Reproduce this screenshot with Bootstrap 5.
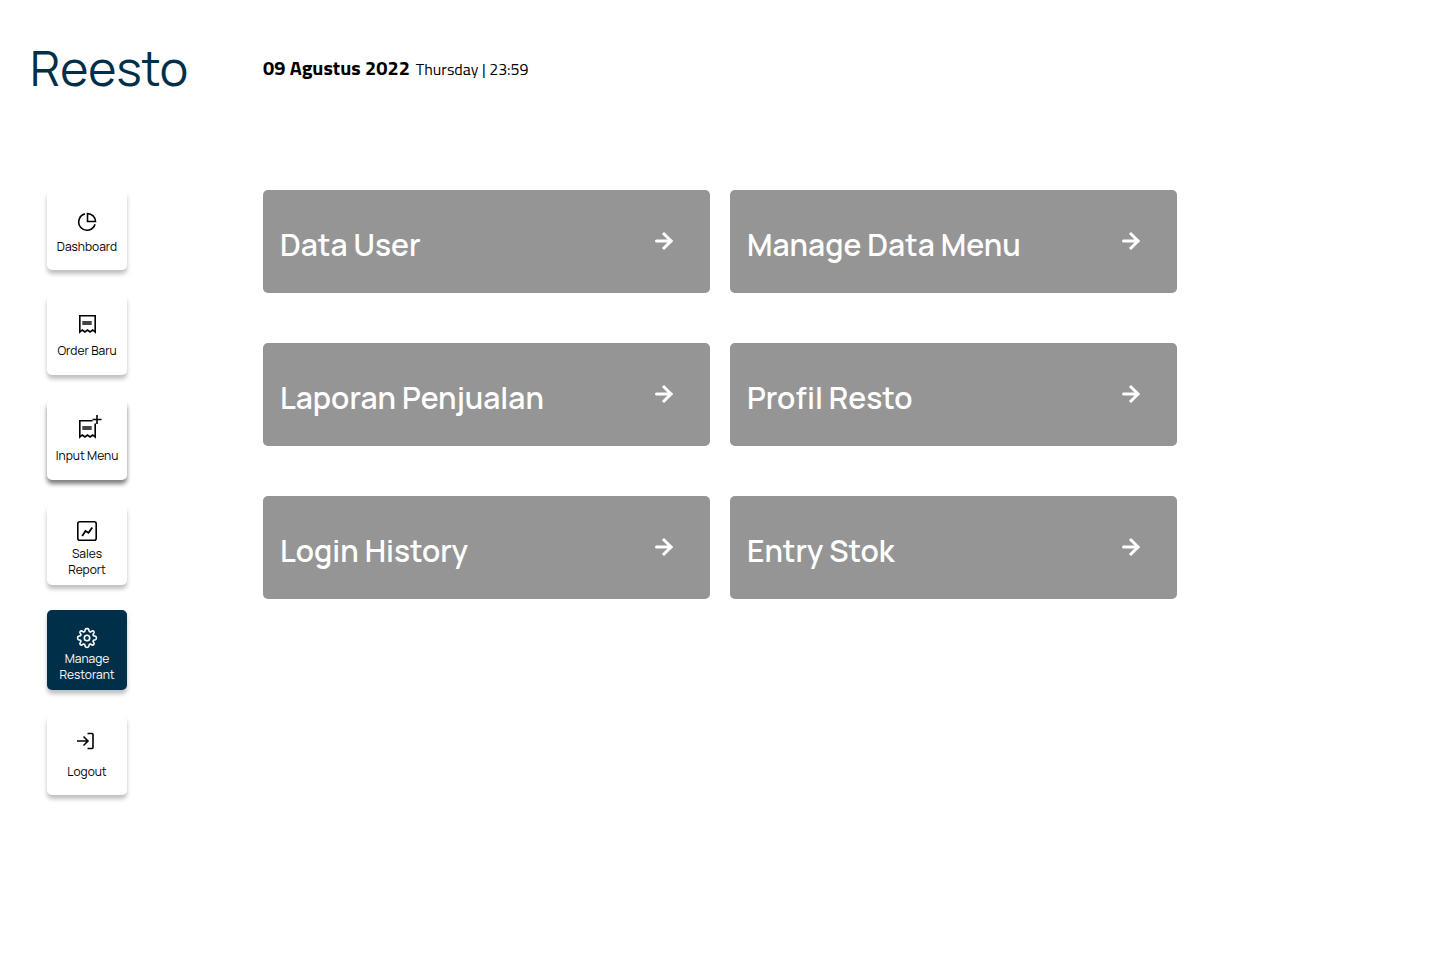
<!DOCTYPE html>
<html lang="id">
<head>
<meta charset="utf-8">
<meta name="viewport" content="width=device-width, initial-scale=1">
<title>Reesto</title>
<link href="https://cdn.jsdelivr.net/npm/bootstrap@5.3.0/dist/css/bootstrap.min.css" rel="stylesheet">
<style>
  :root { --navy: #003049; --side: 263px; }
  body { font-family: Manrope, Inter, sans-serif; background: #fff; color: #000; }
  .page-grid { display: grid; grid-template-columns: var(--side) minmax(0, 1fr); }
  .top-bar { padding-top: 32px; margin-bottom: 86px; }
  .brand { color: var(--navy); font-size: 48px; line-height: 72px; font-weight: 400; padding-left: 30px; }
  .today { font-family: "Titillium Web", "Open Sans", sans-serif; line-height: 32px; gap: 6px; }
  .today-date { font-size: 20px; font-weight: 700; }
  .today-time { font-size: 16px; }
  .side-menu { padding-left: 47px; padding-bottom: 40px; gap: 25px; }
  .tile { width: 80px; height: 80px; padding-top: 19px; border-radius: 5px; background: #fff; color: #000;
    font-size: 12px; line-height: 16px; box-shadow: 0 4px 4px rgba(0,0,0,.25); gap: 9px; }
  .tile.raised { box-shadow: 0 4px 4px rgba(0,0,0,.5); }
  .tile.dash { padding-top: 22px; gap: 7px; }
  .tile.exit { padding-top: 16px; gap: 13px; }
  .tile.two-line { padding-top: 16px; gap: 5px; }
  .tile.active { background: var(--navy); color: #fff; padding-top: 18px; gap: 3px; }
  .tile svg { width: 20px; height: 20px; overflow: visible; fill: none; stroke: currentColor; stroke-width: 1.6; }
  .menu-grid { column-gap: 20px; row-gap: 50px; padding-right: var(--side); grid-template-columns: repeat(2, minmax(0, 1fr)); }
  .menu-card { height: 103px; padding: 6px 36px 0 17px; border-radius: 5px; background: #959595; color: #fff;
    font-size: 30px; font-weight: 600; }
  .menu-card svg { width: 20px; height: 20px; margin-bottom: 8px; fill: none; stroke: currentColor; stroke-width: 3; }
</style>
</head>
<body>
<svg class="d-none" aria-hidden="true">
  <symbol id="arrow" viewBox="0 0 20 20"><path d="M2.500 10H17" stroke-linecap="round"/><path d="M9 2l8 8-8 8"/></symbol>
  <symbol id="receipt" viewBox="0 0 20 20"><path d="M5.300 9h9.400" stroke="#444" stroke-width="4"/></symbol>
</svg>
<header class="page-grid top-bar align-items-center">
  <h1 class="brand mb-0">Reesto</h1>
  <div class="today d-flex align-items-baseline"><span class="today-date">09 Agustus 2022</span><span class="today-time">Thursday | 23:59</span></div>
</header>
<div class="page-grid">
  <nav class="side-menu d-flex flex-column" aria-label="Menu utama">
    <a href="#" class="tile dash d-flex flex-column align-items-center text-center text-decoration-none">
      <svg viewBox="0 0 20 20"><path d="M8 1.900A8.300 8.300 0 1 0 18 12.300M10.500 1.600V9.500h8A8 8 0 0 0 10.500 1.600Z"/></svg>
      <span>Dashboard</span></a>
    <a href="#" class="tile d-flex flex-column align-items-center text-center text-decoration-none">
      <svg viewBox="0 0 20 20"><path d="M2.800 18V1.800h15.400V18l-2.500-2-2.600 2-2.600-2-2.600 2-2.600-2Z"/><use href="#receipt"/></svg>
      <span>Order Baru</span></a>
    <a href="#" class="tile raised d-flex flex-column align-items-center text-center text-decoration-none">
      <svg viewBox="0 0 20 20"><path d="M15.500 1.800H2.800V18l2.500-2 2.600 2 2.600-2 2.600 2 2.600-2 2.500 2V4.500M20-4V5M15.500.500h9"/><use href="#receipt"/></svg>
      <span>Input Menu</span></a>
    <a href="#" class="tile two-line d-flex flex-column align-items-center text-center text-decoration-none">
      <svg viewBox="0 0 20 20"><rect x=".8" y=".8" width="18.400" height="18.400" rx="2"/><path d="M5.200 15 8.500 10l3 1.800L15.300 6.500" stroke-width="1.800"/></svg>
      <span>Sales<br>Report</span></a>
    <a href="#" class="tile two-line active d-flex flex-column align-items-center text-center text-decoration-none" aria-current="page">
      <svg viewBox="0 0 20 20"><path stroke-linejoin="round" d="M8.300 1.500C8.700.300 11.300.300 11.700 1.500L12.300 3.500 13.400 4 15.200 3C16.300 2.500 17.500 3.700 17 4.800L16 6.600 16.500 7.700 18.500 8.300C19.700 8.700 19.700 11.300 18.500 11.700L16.500 12.300 16 13.400 17 15.200C17.500 16.300 16.300 17.500 15.200 17L13.400 16 12.300 16.500 11.700 18.500C11.300 19.700 8.700 19.700 8.300 18.500L7.700 16.500 6.600 16 4.800 17C3.700 17.500 2.500 16.300 3 15.200L4 13.400 3.500 12.300 1.500 11.700C.300 11.300.300 8.700 1.500 8.300L3.500 7.700 4 6.600 3 4.800C2.500 3.700 3.700 2.500 4.800 3L6.600 4 7.700 3.500Z"/><circle cx="10" cy="10" r="2.700"/></svg>
      <span>Manage<br>Restorant</span></a>
    <a href="#" class="tile exit d-flex flex-column align-items-center text-center text-decoration-none">
      <svg viewBox="0 0 20 20"><path d="M0 10h11M6.500 5.500 11 10l-4.500 4.500M10.500 2.500H15q1 0 1 1v13q0 1-1 1h-4.500"/></svg>
      <span>Logout</span></a>
  </nav>
  <main class="menu-grid d-grid align-content-start">
    <a href="#" class="menu-card d-flex align-items-center justify-content-between text-decoration-none"><span>Data User</span><svg><use href="#arrow"/></svg></a>
    <a href="#" class="menu-card d-flex align-items-center justify-content-between text-decoration-none"><span>Manage Data Menu</span><svg><use href="#arrow"/></svg></a>
    <a href="#" class="menu-card d-flex align-items-center justify-content-between text-decoration-none"><span>Laporan Penjualan</span><svg><use href="#arrow"/></svg></a>
    <a href="#" class="menu-card d-flex align-items-center justify-content-between text-decoration-none"><span>Profil Resto</span><svg><use href="#arrow"/></svg></a>
    <a href="#" class="menu-card d-flex align-items-center justify-content-between text-decoration-none"><span>Login History</span><svg><use href="#arrow"/></svg></a>
    <a href="#" class="menu-card d-flex align-items-center justify-content-between text-decoration-none"><span>Entry Stok</span><svg><use href="#arrow"/></svg></a>
  </main>
</div>
<script src="https://cdn.jsdelivr.net/npm/bootstrap@5.3.0/dist/js/bootstrap.bundle.min.js"></script>
</body>
</html>
